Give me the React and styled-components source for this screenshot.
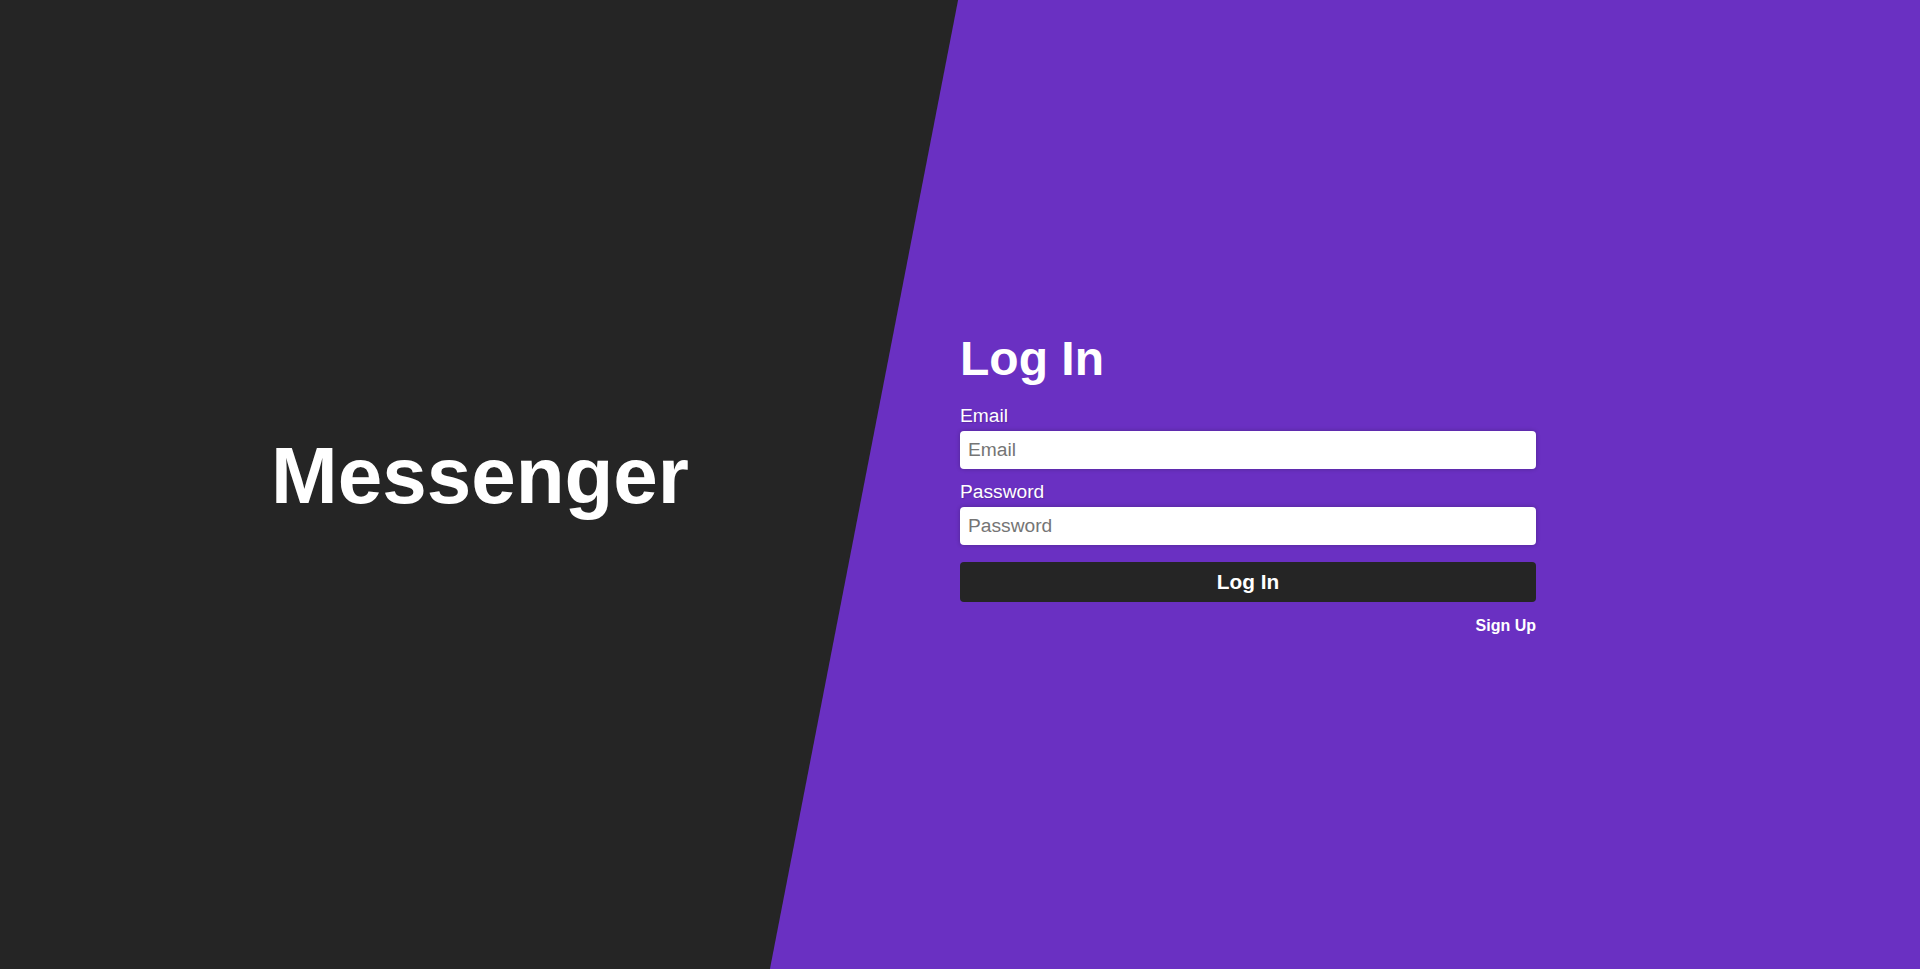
import React from "react";
import styled, { createGlobalStyle } from "styled-components";

const GlobalStyle = createGlobalStyle`
  html, body {
    margin: 0;
    padding: 0;
    height: 100%;
  }
  body {
    font-family: "Liberation Sans", Arial, sans-serif;
    background: #6a30c2;
    overflow: hidden;
  }
  * { box-sizing: border-box; }
`;

const Page = styled.div`
  display: grid;
  grid-template-columns: 1fr 1fr;
  width: 100vw;
  height: 100vh;
  background: #6a30c2;
`;

const BrandPanel = styled.section`
  display: flex;
  align-items: center;
  justify-content: center;
  padding-bottom: 17px;
  background: #252525;
  clip-path: polygon(0 0, 99.8% 0, 80.2% 100%, 0 100%);
`;

const Brand = styled.h1`
  margin: 0;
  font-size: 80px;
  font-weight: 700;
  line-height: 92px;
  color: #ffffff;
`;

const FormPanel = styled.section`
  display: flex;
  align-items: center;
  justify-content: flex-start;
  padding-bottom: 3px;
`;

const Form = styled.form`
  display: flex;
  flex-direction: column;
  width: 60%;
`;

const Title = styled.h2`
  margin: 0 0 20px;
  font-size: 48px;
  font-weight: 700;
  line-height: 55px;
  color: #ffffff;
`;

const Label = styled.label`
  display: block;
  font-size: 19.2px;
  line-height: 20px;
  color: #ffffff;
  margin-bottom: 5px;
  text-shadow: 1px 1px 1px rgba(0, 0, 0, 0.15);
`;

const Field = styled.div`
  display: flex;
  flex-direction: column;
  margin-bottom: ${(p) => p.$gap}px;
`;

const Input = styled.input`
  height: 38px;
  width: 100%;
  padding: 0 8px;
  border: none;
  border-radius: 4px;
  background: #ffffff;
  font-family: "Liberation Sans", Arial, sans-serif;
  font-size: 19.2px;
  color: #222;
  box-shadow: 0 0 4px rgba(0, 0, 0, 0.25);
  outline: none;

  &::placeholder {
    color: #757575;
  }
`;

const Button = styled.button`
  height: 40px;
  width: 100%;
  border: none;
  border-radius: 4px;
  background: #252525;
  color: #ffffff;
  font-family: "Liberation Sans", Arial, sans-serif;
  font-size: 20.8px;
  font-weight: 700;
  cursor: pointer;
  margin-bottom: 15px;
`;

const SignUp = styled.a`
  align-self: flex-end;
  font-size: 16px;
  font-weight: 700;
  line-height: 18px;
  color: #ffffff;
  text-decoration: none;
  cursor: pointer;
`;

export default function App() {
  return (
    <>
      <GlobalStyle />
      <Page>
        <BrandPanel>
          <Brand>Messenger</Brand>
        </BrandPanel>
        <FormPanel>
          <Form onSubmit={(e) => e.preventDefault()}>
            <Title>Log In</Title>
            <Field $gap={13}>
              <Label htmlFor="email">Email</Label>
              <Input id="email" type="email" placeholder="Email" />
            </Field>
            <Field $gap={17}>
              <Label htmlFor="password">Password</Label>
              <Input id="password" type="password" placeholder="Password" />
            </Field>
            <Button type="submit">Log In</Button>
            <SignUp href="#">Sign Up</SignUp>
          </Form>
        </FormPanel>
      </Page>
    </>
  );
}
